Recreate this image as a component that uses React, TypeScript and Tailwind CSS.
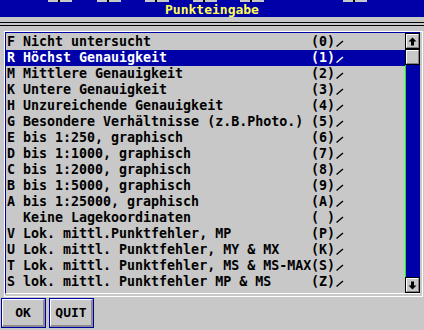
import React from 'react';

const rows: { label: string; code: string }[] = [
  { label: 'F Nicht untersucht', code: '(0)' },
  { label: 'R Höchst Genauigkeit', code: '(1)' },
  { label: 'M Mittlere Genauigkeit', code: '(2)' },
  { label: 'K Untere Genauigkeit', code: '(3)' },
  { label: 'H Unzureichende Genauigkeit', code: '(4)' },
  { label: 'G Besondere Verhältnisse (z.B.Photo.)', code: '(5)' },
  { label: 'E bis 1:250, graphisch', code: '(6)' },
  { label: 'D bis 1:1000, graphisch', code: '(7)' },
  { label: 'C bis 1:2000, graphisch', code: '(8)' },
  { label: 'B bis 1:5000, graphisch', code: '(9)' },
  { label: 'A bis 1:25000, graphisch', code: '(A)' },
  { label: '  Keine Lagekoordinaten', code: '( )' },
  { label: 'V Lok. mittl.Punktfehler, MP', code: '(P)' },
  { label: 'U Lok. mittl. Punktfehler, MY & MX', code: '(K)' },
  { label: 'T Lok. mittl. Punktfehler, MS & MS-MAX', code: '(S)' },
  { label: 'S lok. mittl. Punktfehler MP & MS', code: '(Z)' },
];

const ticks = [48, 97, 145, 193, 240, 343];

function Slash() {
  return (
    <svg width="8" height="8" viewBox="0 0 8 8" className="ml-[1px] self-end mb-[3px]">
      <line x1="0.5" y1="7.5" x2="7" y2="2" stroke="currentColor" strokeWidth="1.4" />
    </svg>
  );
}

function Arrow({ down }: { down?: boolean }) {
  return (
    <svg width="9" height="9" viewBox="0 0 9 9" className={down ? 'rotate-180' : ''}>
      <polygon points="4.5,0.5 8.5,4.5 6,4.5 6,8.5 3,8.5 3,4.5 0.5,4.5" fill="#000" />
    </svg>
  );
}

function ScrollButton({ children }: { children?: React.ReactNode }) {
  return (
    <div className="h-[16px] border border-black bg-[#c8c8c8]">
      <div className="h-full border-t border-l border-white border-r border-b border-r-[#808080] border-b-[#808080] flex items-center justify-center">
        {children}
      </div>
    </div>
  );
}

function Button({ label }: { label: string }) {
  return (
    <div className="w-[45px] h-[30px] border border-[#0000a8]">
      <div className="h-full border-t border-l border-white border-r-2 border-b-2 border-r-[#8c8c8c] border-b-[#8c8c8c] flex items-center justify-center text-[13px] text-black">
        {label}
      </div>
    </div>
  );
}

export default function App() {
  return (
    <div className="w-[424px] h-[330px] bg-[#c8c8c8] overflow-hidden font-['DejaVu_Sans_Mono',monospace] font-bold">
      {/* title bar */}
      <div className="relative h-[17px] bg-[#0000a8] flex items-center justify-center text-[#ffff54] text-[13px] leading-none">
        {ticks.map((x) => (
          <div key={x} className="absolute top-0 h-[2px] w-[24px] bg-[#c8c8c8]" style={{ left: x }}>
            <div className="ml-[10px] w-[2px] h-[2px] bg-black" />
          </div>
        ))}
        <span className="pt-[1px]">Punkteingabe</span>
      </div>

      {/* double rule */}
      <div className="mt-[5px] h-[4px] border-y border-black" />

      {/* list box */}
      <div className="ml-[4px] mr-[1px] mt-[5px] h-[266px] border border-white">
        <div className="h-[262px] mr-[2px] border-t border-l border-[#0000a8] border-b border-b-white flex">
          <div className="flex-1 pt-[1px] text-[13.3px] leading-none text-black">
            {rows.map((r, i) => (
              <div
                key={i}
                className={
                  'h-[16px] pl-[1px] flex items-center whitespace-pre ' +
                  (i === 1 ? 'bg-[#0000a8] text-white' : '')
                }
              >
                <span className="w-[304px] shrink-0 overflow-hidden">{r.label}</span>
                <span>{r.code}</span>
                <Slash />
              </div>
            ))}
          </div>
          <div className="w-[15px] flex flex-col">
            <ScrollButton>
              <Arrow />
            </ScrollButton>
            <ScrollButton />
            <div className="flex-1 bg-[#0000a8] border-l border-[#00ff00]" />
            <ScrollButton>
              <Arrow down />
            </ScrollButton>
          </div>
        </div>
      </div>

      {/* buttons */}
      <div className="mt-[1px] pl-[1px] flex gap-[3px]">
        <Button label="OK" />
        <Button label="QUIT" />
      </div>
    </div>
  );
}
